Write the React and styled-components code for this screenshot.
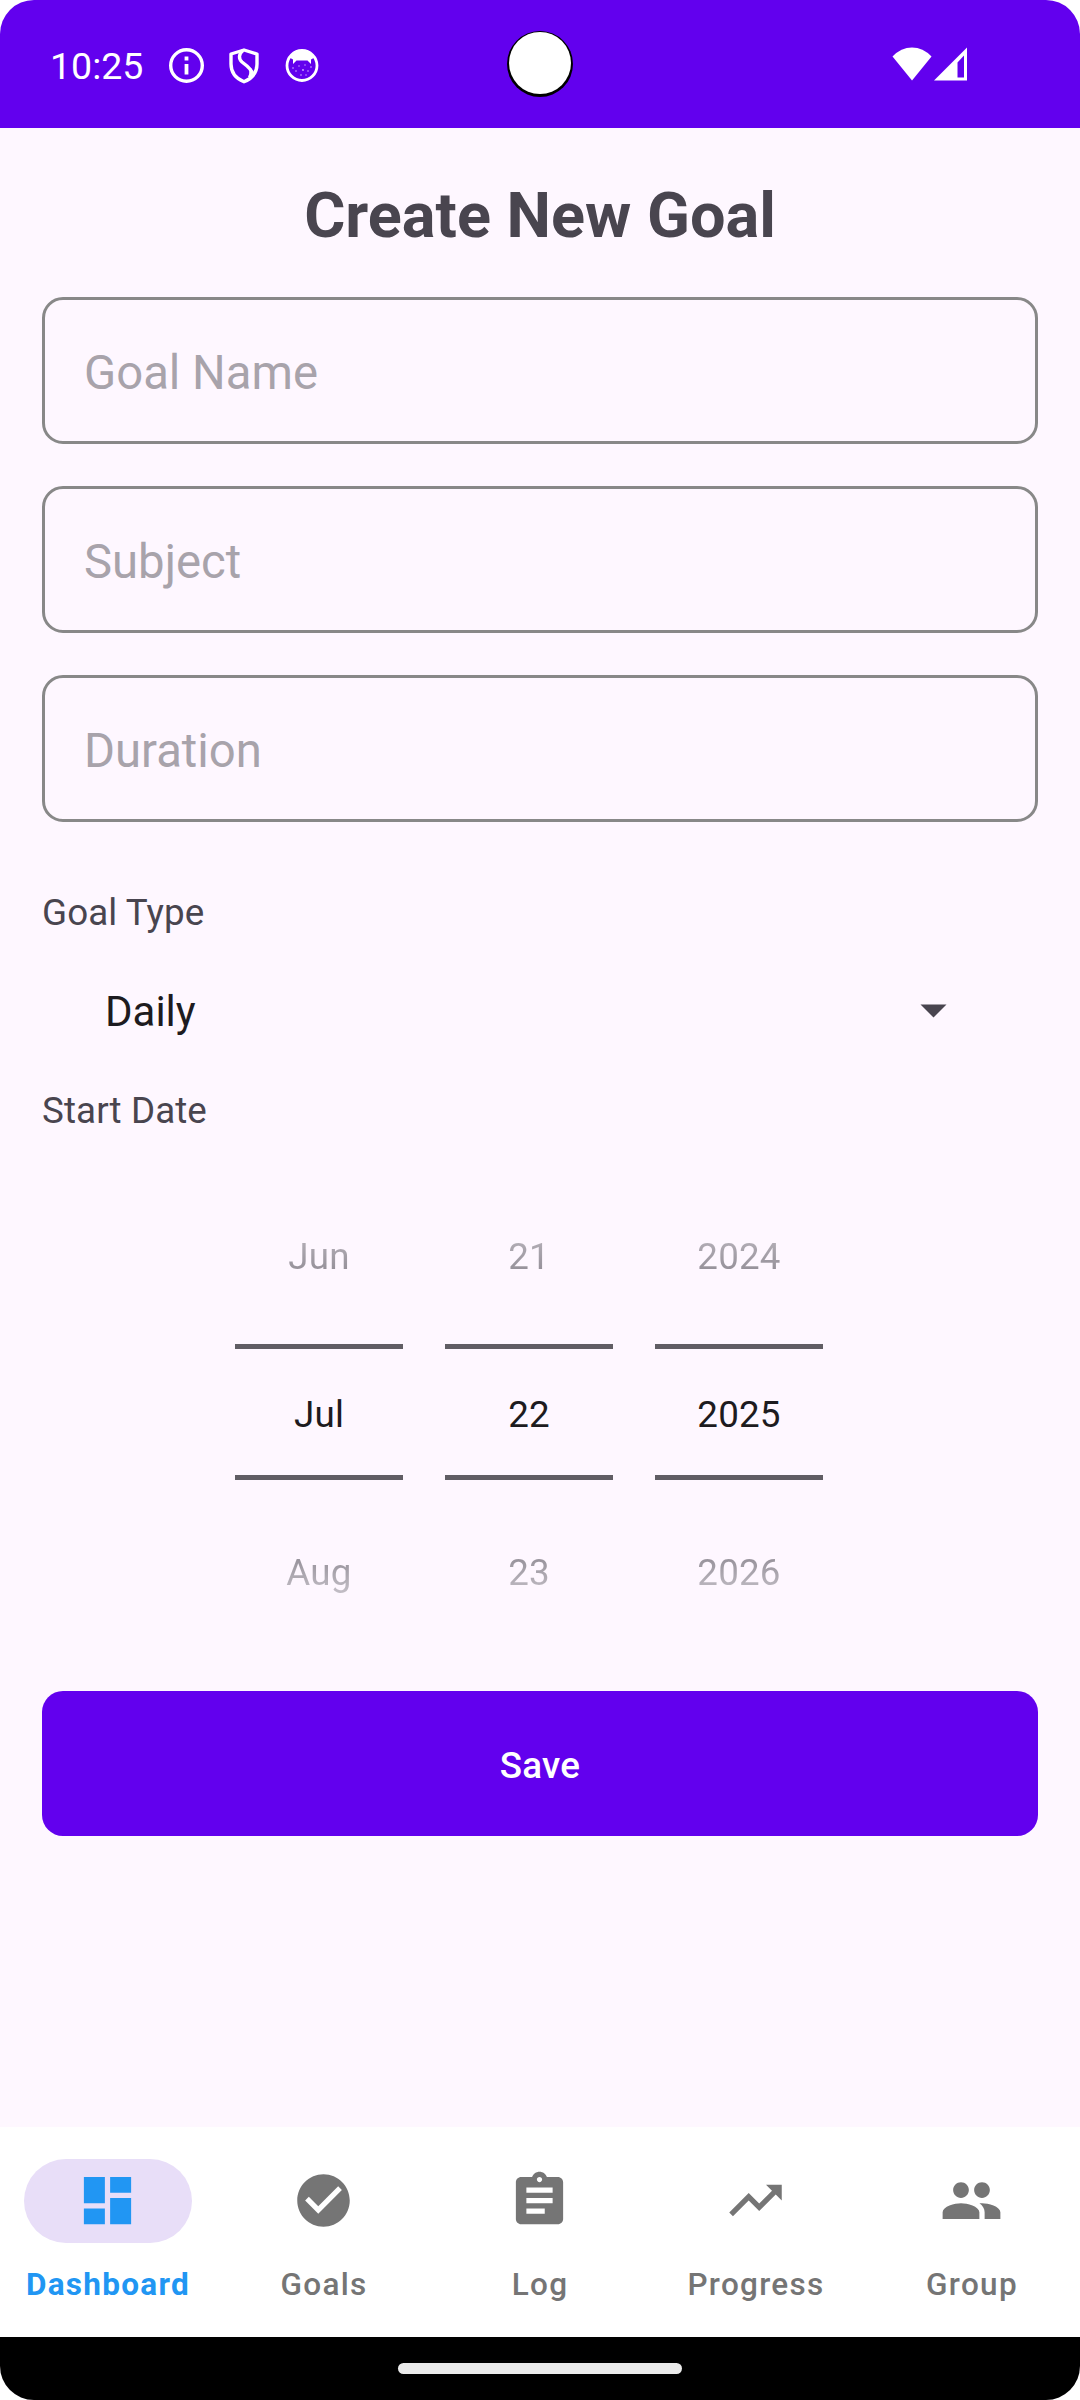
import React from 'react';
import styled, { createGlobalStyle } from 'styled-components';

const GlobalStyle = createGlobalStyle`
  * { box-sizing: border-box; }
  body { margin: 0; background: #fff; font-family: Roboto, "Liberation Sans", sans-serif; }
`;

const Screen = styled.div`
  width: 1080px;
  height: 2400px;
  display: flex;
  flex-direction: column;
  background: #fef7ff;
  border-radius: 34px;
  overflow: hidden;
`;

const StatusBar = styled.header`
  position: relative;
  height: 128px;
  flex: none;
  display: flex;
  align-items: center;
  justify-content: space-between;
  padding: 4px 113px 0 50px;
  background: #6200ee;
  color: #fff;
`;

const StatusGroup = styled.div`
  display: flex;
  align-items: center;
  gap: ${(p) => p.$gap}px;
  padding-bottom: ${(p) => p.$lift || 0}px;
  svg { display: block; }
`;

const Clock = styled.span`
  width: 95px;
  font-size: 37.5px;
  line-height: 44px;
`;

const FaceSvg = styled.svg`
  margin-left: 2px;
`;

const Camera = styled.div`
  position: absolute;
  left: 507px;
  top: 31px;
  width: 66px;
  height: 66px;
  border-radius: 50%;
  background: #000;
  &::after {
    content: "";
    position: absolute;
    left: 2px;
    top: 1px;
    width: 62px;
    height: 62px;
    border-radius: 50%;
    background: #fff;
  }
`;

const Content = styled.main`
  flex: 1;
  display: flex;
  flex-direction: column;
  padding: 42px 42px 0;
`;

const Title = styled.h1`
  margin: 6px 0 42px;
  height: 79px;
  font-size: 63px;
  line-height: 79px;
  font-weight: 700;
  text-align: center;
  color: #49454f;
`;

const Field = styled.input`
  display: block;
  width: 100%;
  height: 147px;
  margin: 0 0 42px;
  padding: 5px 39px 0;
  border: 3px solid #888;
  border-radius: 21px;
  background: transparent;
  font-family: inherit;
  font-size: 47.25px;
  outline: none;
  &::placeholder { color: #a8a3ab; opacity: 1; }
`;

const Label = styled.div`
  height: 51px;
  margin-top: ${(p) => p.$top}px;
  font-size: 36.75px;
  line-height: 51px;
  letter-spacing: 0.1px;
  color: #49454f;
`;

const Select = styled.div`
  display: flex;
  align-items: center;
  justify-content: space-between;
  height: 63px;
  margin-top: 42px;
  padding: 0 91px 0 63px;
  font-size: 42px;
  color: #1d1b20;
  svg { display: block; margin-bottom: 2px; }
`;

const DatePicker = styled.div`
  display: flex;
  gap: 42px;
  margin: 79px 0 0 193px;
`;

const Wheel = styled.div`
  width: 168px;
  height: 476px;
  display: flex;
  flex-direction: column;
  align-items: center;
  font-size: 36.75px;
  letter-spacing: 0.2px;
`;

const Faded = styled.div`
  height: 43px;
  line-height: 43px;
  margin-top: ${(p) => p.$top}px;
  color: transparent;
  background: linear-gradient(${(p) => p.$colors});
  background-clip: text;
  -webkit-background-clip: text;
`;

const Selected = styled.div`
  width: 168px;
  height: 136px;
  margin-top: 66px;
  border: solid #605d64;
  border-width: 5px 0;
  line-height: 125px;
  padding-top: 3px;
  text-align: center;
  color: #1d1b20;
`;

const SaveButton = styled.button`
  height: 145px;
  padding: 4px 0 0;
  border: 0;
  border-radius: 21px;
  background: #6200ee;
  color: #fff;
  font-family: inherit;
  font-size: 36.75px;
  font-weight: 500;
  letter-spacing: 0.2px;
`;

const NavBar = styled.nav`
  height: 210px;
  flex: none;
  display: grid;
  grid-template-columns: repeat(5, 216px);
  background: #fff;
`;

const NavItem = styled.div`
  display: flex;
  flex-direction: column;
  align-items: center;
  padding-top: 32px;
  font-size: 31.5px;
  line-height: 43px;
  font-weight: ${(p) => (p.$active ? 700 : 500)};
  letter-spacing: 1.3px;
  color: ${(p) => (p.$active ? '#2196f3' : '#757575')};
`;

const Pill = styled.div`
  display: flex;
  align-items: center;
  justify-content: center;
  width: 168px;
  height: 84px;
  padding: 0 1px 1px 0;
  margin-bottom: 20px;
  border-radius: 42px;
  background: ${(p) => (p.$active ? '#e8def8' : 'transparent')};
`;

const GestureBar = styled.footer`
  height: 63px;
  flex: none;
  display: flex;
  justify-content: center;
  padding-top: 26px;
  background: #000;
`;

const Handle = styled.div`
  width: 284px;
  height: 11px;
  border-radius: 6px;
  background: #ebebeb;
`;

const NAV = [
  { label: 'Dashboard', d: 'M3 13h8V3H3v10zm0 8h8v-6H3v6zm10 0h8V11h-8v10zm0-18v6h8V3h-8z' },
  { label: 'Goals', d: 'M12 2C6.48 2 2 6.48 2 12s4.48 10 10 10 10-4.48 10-10S17.52 2 12 2zm-2 15l-5-5 1.41-1.41L10 14.17l7.59-7.59L19 8l-9 9z' },
  { label: 'Log', d: 'M19 3h-4.18C14.4 1.84 13.3 1 12 1s-2.4.84-2.82 2H5c-1.1 0-2 .9-2 2v14c0 1.1.9 2 2 2h14c1.1 0 2-.9 2-2V5c0-1.1-.9-2-2-2zm-7 0c.55 0 1 .45 1 1s-.45 1-1 1-1-.45-1-1 .45-1 1-1zm2 14H7v-2h7v2zm3-4H7v-2h10v2zm0-4H7V7h10v2z' },
  { label: 'Progress', d: 'M16 6l2.29 2.29-4.88 4.88-4-4L2 16.59 3.41 18l6-6 4 4 6.3-6.29L22 12V6z' },
  { label: 'Group', d: 'M16 11c1.66 0 2.99-1.34 2.99-3S17.66 5 16 5s-3 1.34-3 3 1.34 3 3 3zm-8 0c1.66 0 2.99-1.34 2.99-3S9.66 5 8 5 5 6.34 5 8s1.34 3 3 3zm0 2c-2.33 0-7 1.17-7 3.5V19h14v-2.5c0-2.33-4.67-3.5-7-3.5zm8 0c-.29 0-.62.02-.97.05 1.16.84 1.97 1.97 1.97 3.45V19h6v-2.5c0-2.33-4.67-3.5-7-3.5z' },
];

const WHEELS = [
  ['Jun', 'Jul', 'Aug'],
  ['21', '22', '23'],
  ['2024', '2025', '2026'],
];

const InfoIcon = () => (
  <svg width="36" height="36" viewBox="0 0 36 36" fill="none" stroke="#fff" strokeWidth="3.4">
    <circle cx="17.5" cy="17.5" r="15.8" />
    <path d="M17.500 16V26.500M17.500 8.500v4" strokeWidth="3.8" />
  </svg>
);

const ShieldIcon = () => (
  <svg width="30" height="36" viewBox="0 0 30 36" fill="none" stroke="#fff" strokeWidth="3.4" strokeLinejoin="round">
    <path d="M15 2L28 6V16c0 8-5 14.500-13 17.800C7 30.500 2 24 2 16V6z" />
    <path d="M14 2.500C9.500 6 9.500 11 13 14L18 18C22 21.500 23.500 24 20.500 29.500" />
    <path d="M22 21l2 3-3 5z" strokeWidth="1.500" fill="#fff" />
  </svg>
);

const FaceIcon = () => (
  <FaceSvg width="34" height="34" viewBox="0 0 34 34">
    <circle cx="17" cy="16.5" r="15" fill="none" stroke="#fff" strokeWidth="2.8" />
    <path d="M4.500 8.500Q17-5 29.500 8.500L26 10.500 26 15 22.500 11.500H11.500L8 15 8 10.500z" fill="#fff" />
    <g fill="#fff" opacity=".7">
      <circle cx="8" cy="19" r=".8" /><circle cx="14" cy="17" r=".7" /><circle cx="20" cy="16" r=".7" />
      <circle cx="26" cy="18" r=".8" /><circle cx="11" cy="22" r=".8" /><circle cx="18" cy="21" r=".9" />
      <circle cx="23" cy="22" r=".8" /><circle cx="16" cy="26" r=".8" /><circle cx="21" cy="26" r=".7" />
    </g>
  </FaceSvg>
);

const WifiIcon = () => (
  <svg width="40" height="34" viewBox="0 0 40 34"><path d="M0.500 9.500Q9 .5 20 .5t19.500 9L20 33.500z" fill="#fff" /></svg>
);

const SignalIcon = () => (
  <svg width="33" height="34" viewBox="0 0 33 34"><path fillRule="evenodd" d="M33 .5V33.500H0zM30 8.500L23.500 15.500V30.500H30z" fill="#fff" /></svg>
);

export default function App() {
  return (
    <>
      <GlobalStyle />
      <Screen>
        <StatusBar>
          <StatusGroup $gap={24}>
            <Clock>10:25</Clock>
            <InfoIcon />
            <ShieldIcon />
            <FaceIcon />
          </StatusGroup>
          <StatusGroup $gap={2} $lift={5}>
            <WifiIcon />
            <SignalIcon />
          </StatusGroup>
          <Camera />
        </StatusBar>
        <Content>
          <Title>Create New Goal</Title>
          <Field placeholder="Goal Name" />
          <Field placeholder="Subject" />
          <Field placeholder="Duration" />
          <Label $top={23}>Goal Type</Label>
          <Select>
            <span>Daily</span>
            <svg width="27" height="14" viewBox="0 0 27 14"><path d="M.5.500h26L13.500 13.500z" fill="#49454f" /></svg>
          </Select>
          <Label $top={42}>Start Date</Label>
          <DatePicker>
            {WHEELS.map(([prev, current, next]) => (
              <Wheel key={current}>
                <Faded $top={20} $colors="#b8b3bb, #8e8992">{prev}</Faded>
                <Selected>{current}</Selected>
                <Faded $top={71} $colors="#8e8992, #c4bfc7">{next}</Faded>
              </Wheel>
            ))}
          </DatePicker>
          <SaveButton>Save</SaveButton>
        </Content>
        <NavBar>
          {NAV.map(({ label, d }, i) => (
            <NavItem key={label} $active={i === 0}>
              <Pill $active={i === 0}>
                <svg width="63" height="63" viewBox="0 0 24 24" fill="currentColor"><path d={d} /></svg>
              </Pill>
              <span>{label}</span>
            </NavItem>
          ))}
        </NavBar>
        <GestureBar><Handle /></GestureBar>
      </Screen>
    </>
  );
}
